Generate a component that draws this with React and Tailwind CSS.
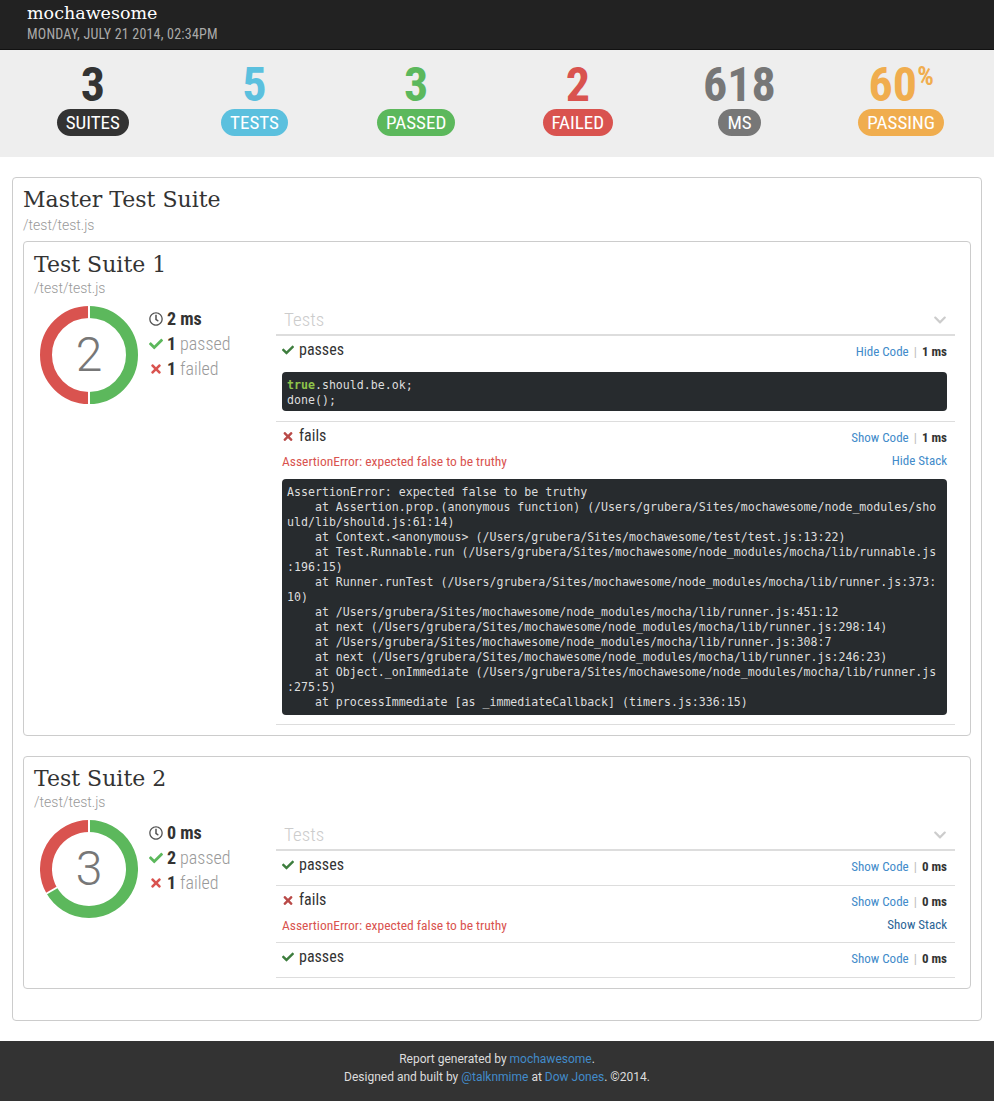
import React from "react";
import { FaCheck, FaTimes, FaChevronDown, FaRegClock } from "react-icons/fa";

const SANS = "font-['Roboto_Condensed','Liberation_Sans_Narrow','Roboto',sans-serif] font-stretch-condensed";
const SERIF = "font-['Roboto_Slab','DejaVu_Serif',serif]";
const MONO = "font-['Droid_Sans_Mono','DejaVu_Sans_Mono',monospace]";

function pt(cx, cy, r, deg) {
  const a = ((deg - 90) * Math.PI) / 180;
  return [cx + r * Math.cos(a), cy + r * Math.sin(a)];
}
function arc(cx, cy, r, s, e) {
  const [x1, y1] = pt(cx, cy, r, s);
  const [x2, y2] = pt(cx, cy, r, e);
  const large = e - s > 180 ? 1 : 0;
  return `M ${x1} ${y1} A ${r} ${r} 0 ${large} 1 ${x2} ${y2}`;
}

function Donut({ total, passed }) {
  const split = (passed / total) * 360;
  const sep = (deg) => {
    const [x1, y1] = pt(49, 49, 36, deg);
    const [x2, y2] = pt(49, 49, 50, deg);
    return <line x1={x1} y1={y1} x2={x2} y2={y2} stroke="#fff" strokeWidth="2" />;
  };
  return (
    <div className="grid w-[98px] h-[98px] place-items-center">
      <svg width="98" height="98" viewBox="0 0 98 98" className="[grid-area:1/1]">
        <path d={arc(49, 49, 43, 0, split)} fill="none" stroke="#5cb85c" strokeWidth="12" />
        <path d={arc(49, 49, 43, split, 360)} fill="none" stroke="#d9534f" strokeWidth="12" />
        {sep(0)}
        {sep(split)}
      </svg>
      <span className="[grid-area:1/1] font-['Roboto',sans-serif] font-light text-[48px] leading-none text-[#777]">
        {total}
      </span>
    </div>
  );
}

function Stat({ num, label, color, bg, pct }) {
  return (
    <div className="flex flex-col items-center">
      <div className={`${SANS} font-bold text-[48px] leading-[48px] ${color}`}>
        {num}
        {pct && <span className="text-[26px] align-top leading-[30px]">%</span>}
      </div>
      <div className={`${SANS} ${bg} text-white text-[19px] leading-[27px] px-[9px] rounded-full uppercase`}>
        {label}
      </div>
    </div>
  );
}

function Meta({ ms, passed, failed }) {
  return (
    <div className={`${SANS} ml-[11px] text-[18px] leading-[25px]`}>
      <div className="flex items-center gap-[4px] text-[#333] font-bold">
        <FaRegClock className="text-[#555] w-[14px] h-[14px]" />
        <span>{ms} ms</span>
      </div>
      <div className="flex items-center gap-[4px]">
        <FaCheck className="text-[#5cb85c] w-[14px] h-[14px]" />
        <span className="font-bold text-[#333]">{passed}</span>
        <span className="font-light text-[#999]">passed</span>
      </div>
      <div className="flex items-center gap-[4px]">
        <FaTimes className="text-[#d9534f] w-[12px] h-[14px] mx-[1px]" />
        <span className="font-bold text-[#333]">{failed}</span>
        <span className="font-light text-[#999]">failed</span>
      </div>
    </div>
  );
}

function TestRow({ pass, title, codeLabel, ms, error, stackLabel, stackDark, children, pb }) {
  return (
    <div className={`pl-[6px] pr-[8px] pt-[4px] ${pb || "pb-[10px]"} border-b border-[#ddd]`}>
      <div className={`flex items-center justify-between h-[20px] ${SANS}`}>
        <div className="flex items-center gap-[5px] text-[16px] leading-[20px] text-[#333]">
          {pass ? (
            <FaCheck className="text-[#3d7d3d] w-[12px] h-[12px]" />
          ) : (
            <FaTimes className="text-[#b94a48] w-[10px] h-[13px] mx-[1px]" />
          )}
          <span>{title}</span>
        </div>
        <div className="text-[13px] leading-[16px] flex items-baseline mt-[3px]">
          <span className="text-[#428bca]">{codeLabel}</span>
          <span className="text-[#bbb] mx-[5px]">|</span>
          <span className="font-bold text-[#333]">{ms} ms</span>
        </div>
      </div>
      {error && (
        <div className={`flex justify-between mt-[6px] text-[13.5px] leading-[18px] ${SANS}`}>
          <span className="text-[#d9534f]">AssertionError: expected false to be truthy</span>
          <span className={`text-[13px] ${stackDark ? "text-[#2a6496]" : "text-[#428bca]"}`}>{stackLabel}</span>
        </div>
      )}
      {children}
    </div>
  );
}

function TestsHeader() {
  return (
    <div className={`flex items-center justify-between px-[8px] pb-[2px] border-b-2 border-[#ddd] ${SANS}`}>
      <span className="text-[19px] leading-[24px] text-[#ccc] font-light">Tests</span>
      <FaChevronDown className="text-[#ccc] w-[14px] h-[14px]" />
    </div>
  );
}

const stack = [
  "AssertionError: expected false to be truthy",
  "    at Assertion.prop.(anonymous function) (/Users/grubera/Sites/mochawesome/node_modules/sho",
  "uld/lib/should.js:61:14)",
  "    at Context.<anonymous> (/Users/grubera/Sites/mochawesome/test/test.js:13:22)",
  "    at Test.Runnable.run (/Users/grubera/Sites/mochawesome/node_modules/mocha/lib/runnable.js",
  ":196:15)",
  "    at Runner.runTest (/Users/grubera/Sites/mochawesome/node_modules/mocha/lib/runner.js:373:",
  "10)",
  "    at /Users/grubera/Sites/mochawesome/node_modules/mocha/lib/runner.js:451:12",
  "    at next (/Users/grubera/Sites/mochawesome/node_modules/mocha/lib/runner.js:298:14)",
  "    at /Users/grubera/Sites/mochawesome/node_modules/mocha/lib/runner.js:308:7",
  "    at next (/Users/grubera/Sites/mochawesome/node_modules/mocha/lib/runner.js:246:23)",
  "    at Object._onImmediate (/Users/grubera/Sites/mochawesome/node_modules/mocha/lib/runner.js",
  ":275:5)",
  "    at processImmediate [as _immediateCallback] (timers.js:336:15)",
];

function SuiteTitle({ title }) {
  return (
    <>
      <div className={`${SERIF} text-[22px] leading-[30px] text-[#333]`}>{title}</div>
      <div className="font-['Roboto',sans-serif] font-light text-[14px] leading-[16px] text-[#999]">/test/test.js</div>
    </>
  );
}

export default function App() {
  return (
    <div className="bg-white font-['Roboto',sans-serif] text-[#333]">
      <header className="bg-[#222] h-[50px] px-[27px] pt-[2px] border-b border-[#111]">
        <div className={`${SERIF} text-white text-[17.5px] leading-[23px]`}>mochawesome</div>
        <div className={`${SANS} text-[#aaa] text-[14px] leading-[18px] tracking-[0.2px] uppercase`}>Monday, July 21 2014, 02:34PM</div>
      </header>

      <div className="bg-[#eee] h-[107px] px-[12px] pt-[11px] grid grid-cols-6">
        <Stat num="3" label="Suites" color="text-[#333]" bg="bg-[#333]" />
        <Stat num="5" label="Tests" color="text-[#5bc0de]" bg="bg-[#5bc0de]" />
        <Stat num="3" label="Passed" color="text-[#5cb85c]" bg="bg-[#5cb85c]" />
        <Stat num="2" label="Failed" color="text-[#d9534f]" bg="bg-[#d9534f]" />
        <Stat num="618" label="ms" color="text-[#777]" bg="bg-[#777]" />
        <Stat num="60" pct label="Passing" color="text-[#f0ad4e]" bg="bg-[#f0ad4e]" />
      </div>

      <div className="px-[12px] pt-[20px]">
        <div className="border border-[#ccc] rounded-[4px] px-[10px] pt-[7px] pb-[31px]">
          <div className={`${SERIF} text-[22px] leading-[30px] text-[#333]`}>Master Test Suite</div>
          <div className="font-['Roboto',sans-serif] font-light text-[14px] leading-[20px] text-[#999]">/test/test.js</div>

          <div className="mt-[6px] border border-[#ccc] rounded-[4px] px-[10px] pt-[8px] pb-[10px]">
            <SuiteTitle title="Test Suite 1" />
            <div className="flex mt-[10px]">
              <div className="w-[242px] flex items-start pl-[6px]">
                <Donut total={2} passed={1} />
                <Meta ms={2} passed={1} failed={1} />
              </div>
              <div className="w-[679px] mt-[2px]">
                <TestsHeader />
                <TestRow pass title="passes" codeLabel="Hide Code" ms={1}>
                  <div className={`mt-[12px] bg-[#272b2e] rounded-[4px] pl-[5px] pt-[6px] pb-[3px] ${MONO} text-[11.6px] leading-[15px] text-[#ddd] whitespace-pre`}>
                    <div>
                      <span className="text-[#8fc34a] font-bold">true</span>.should.be.ok;
                    </div>
                    <div>done();</div>
                  </div>
                </TestRow>
                <TestRow title="fails" codeLabel="Show Code" ms={1} error stackLabel="Hide Stack" pb="pb-[9px]">
                  <div className={`mt-[9px] bg-[#272b2e] rounded-[4px] pl-[5px] pt-[6px] pb-[5px] ${MONO} text-[11.6px] leading-[15px] text-[#ddd] whitespace-pre`}>
                    {stack.map((l, i) => (
                      <div key={i}>{l}</div>
                    ))}
                  </div>
                </TestRow>
              </div>
            </div>
          </div>

          <div className="mt-[20px] border border-[#ccc] rounded-[4px] px-[10px] pt-[7px] pb-[10px]">
            <SuiteTitle title="Test Suite 2" />
            <div className="flex mt-[10px]">
              <div className="w-[242px] flex items-start pl-[6px]">
                <Donut total={3} passed={2} />
                <Meta ms={0} passed={2} failed={1} />
              </div>
              <div className="w-[679px] mt-[3px]">
                <TestsHeader />
                <TestRow pass title="passes" codeLabel="Show Code" ms={0} />
                <TestRow title="fails" codeLabel="Show Code" ms={0} error stackLabel="Show Stack" stackDark pb="pb-[8px]" />
                <TestRow pass title="passes" codeLabel="Show Code" ms={0} />
              </div>
            </div>
          </div>
        </div>
      </div>

      <footer className={`mt-[20px] bg-[#333] h-[60px] pt-[9px] text-center text-[12px] leading-[18px] text-[#ddd] font-['Roboto',sans-serif]`}>
        <div>
          Report generated by <span className="text-[#428bca]">mochawesome</span>.
        </div>
        <div>
          Designed and built by <span className="text-[#428bca]">@talknmime</span> at{" "}
          <span className="text-[#428bca]">Dow Jones</span>. ©2014.
        </div>
      </footer>
    </div>
  );
}
